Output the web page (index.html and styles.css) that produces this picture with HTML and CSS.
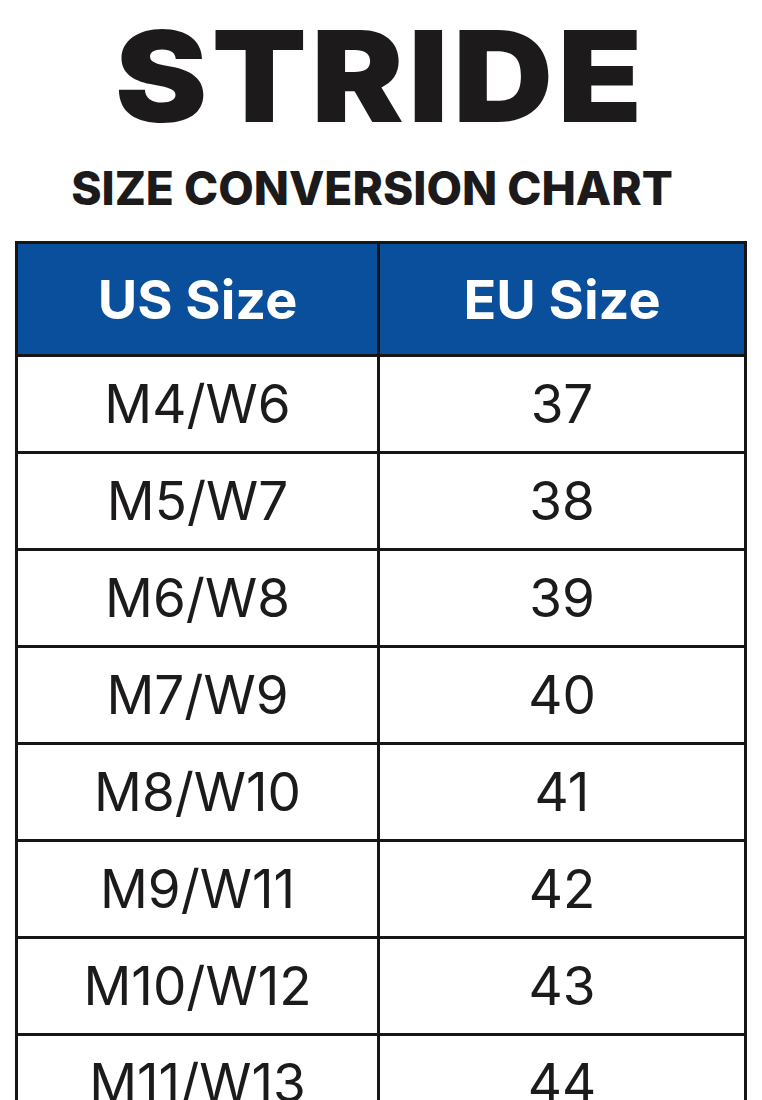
FILE: index.html
```html
<!DOCTYPE html>
<html lang="en">
<head>
<meta charset="utf-8">
<title>Stride Size Conversion Chart</title>
<link rel="stylesheet" href="styles.css">
</head>
<body>
<main class="page">
  <header class="titles">
    <h1 class="brand">STRIDE</h1>
    <h2 class="subtitle">SIZE CONVERSION CHART</h2>
  </header>
  <section class="chart">
    <div class="row head"><div class="cell">US Size</div><div class="cell">EU Size</div></div>
    <div class="row"><div class="cell">M4/W6</div><div class="cell">37</div></div>
    <div class="row"><div class="cell">M5/W7</div><div class="cell">38</div></div>
    <div class="row"><div class="cell">M6/W8</div><div class="cell">39</div></div>
    <div class="row"><div class="cell">M7/W9</div><div class="cell">40</div></div>
    <div class="row"><div class="cell">M8/W10</div><div class="cell">41</div></div>
    <div class="row"><div class="cell">M9/W11</div><div class="cell">42</div></div>
    <div class="row"><div class="cell">M10/W12</div><div class="cell">43</div></div>
    <div class="row"><div class="cell">M11/W13</div><div class="cell">44</div></div>
  </section>
</main>
</body>
</html>
```
FILE: styles.css
```css
html, body {
  margin: 0;
  padding: 0;
  background: #ffffff;
}
body {
  font-family: Inter, "Liberation Sans", sans-serif;
  color: #1c1a1b;
}
.page {
  padding: 0 15px;
}
.titles {
  display: flex;
  flex-direction: column;
  align-items: center;
}
.brand {
  align-self: stretch;
  text-align: center;
  margin: 0;
  padding: 0;
  font-size: 126px;
  line-height: 153px;
  font-weight: 900;
  letter-spacing: 4px;
  color: #1c1a1b;
  transform: scaleX(1.1);
}
.subtitle {
  margin: 0;
  margin-top: 5px;
  font-size: 46px;
  line-height: 60px;
  font-weight: 800;
  letter-spacing: 0;
  color: #1c1a1b;
  transform: translateX(-9px);
}
.chart {
  margin-top: 23px;
  border: 3px solid #161616;
  border-bottom: none;
}
.row {
  display: grid;
  grid-template-columns: 362px 1fr;
  height: 94px;
  border-top: 3px solid #161616;
}
.row.head {
  border-top: none;
  height: 110px;
  background: #0a4f9c;
}
.cell {
  display: flex;
  align-items: center;
  justify-content: center;
  font-size: 53px;
  font-weight: 400;
  color: #1c1a1b;
}
.cell:first-child {
  border-right: 3px solid #161616;
}
.head .cell {
  color: #ffffff;
  font-weight: 700;
  font-size: 54px;
}
```
